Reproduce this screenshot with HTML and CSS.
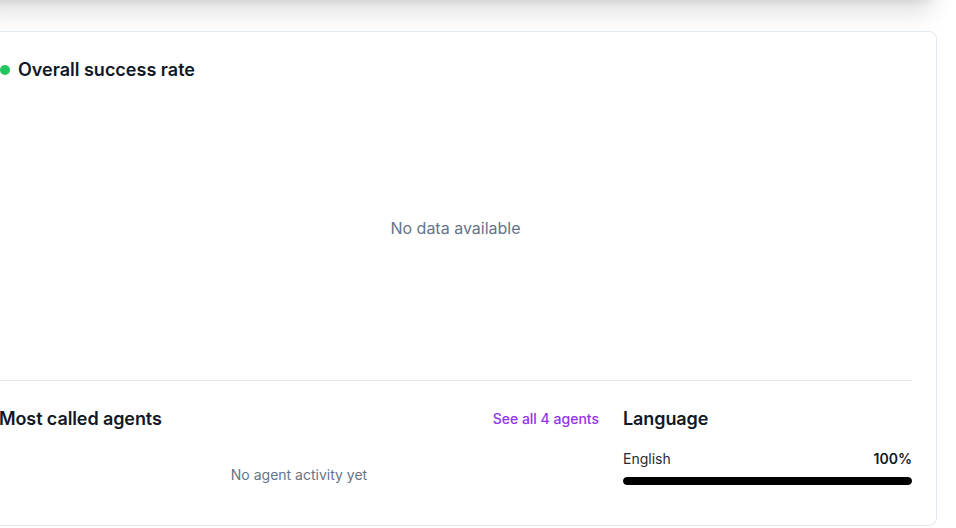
FILE: index.html
```html
<!DOCTYPE html>
<html lang="en">
<head>
<meta charset="utf-8">
<title>Overview</title>
<link rel="stylesheet" href="styles.css">
</head>
<body>
<div class="page">
  <div class="top-panel"></div>
  <section class="card">
    <div class="card-title">
      <span class="dot"></span>
      <h2>Overall success rate</h2>
    </div>
    <div class="chart">
      <p class="empty">No data available</p>
    </div>
    <div class="bottom">
      <div class="agents">
        <div class="row-head">
          <h3>Most called agents</h3>
          <a class="link" href="#">See all 4 agents</a>
        </div>
        <p class="empty-small">No agent activity yet</p>
      </div>
      <div class="language">
        <h3>Language</h3>
        <div class="lang-row">
          <span>English</span>
          <span class="pct">100%</span>
        </div>
        <div class="bar"><div class="bar-fill" style="width:100%"></div></div>
      </div>
    </div>
  </section>
</div>
</body>
</html>
```

FILE: styles.css
```css
* { box-sizing: border-box; }
html, body { margin: 0; padding: 0; background: #ffffff; }
body {
  font-family: Inter, "Noto Sans", "Liberation Sans", sans-serif;
  color: #111827;
  overflow: hidden;
}
.page {
  margin-left: -26px;
  width: 963px;
  display: flex;
  flex-direction: column;
}
.top-panel {
  height: 60px;
  margin-top: -62px;
  width: 100%;
  background: #fff;
  border-radius: 12px;
  box-shadow: 0 20px 25px -5px rgba(0,0,0,0.12), 0 8px 10px -6px rgba(0,0,0,0.12);
}
.card {
  margin-top: 33px;
  border: 1px solid #e2e8f0;
  border-radius: 8px;
  padding: 24px;
  background: #fff;
}
.card-title {
  display: flex;
  align-items: center;
  gap: 8px;
  height: 28px;
}
.dot {
  width: 10px;
  height: 10px;
  margin-left: 1px;
  border-radius: 50%;
  background: #22c55e;
}
h2 {
  margin: 0;
  font-size: 18px;
  line-height: 28px;
  font-weight: 600;
  color: #111827;
}
.chart {
  height: 264px;
  margin-top: 12px;
  margin-bottom: 20px;
  display: flex;
  align-items: center;
  justify-content: center;
}
.empty {
  margin: 0;
  font-size: 16px;
  line-height: 24px;
  color: #64748b;
}
.bottom {
  border-top: 1px solid #e2e8f0;
  padding-top: 24px;
  display: grid;
  grid-template-columns: 1fr 289px;
  gap: 24px;
}
h3 {
  margin: 0;
  font-size: 18px;
  line-height: 28px;
  font-weight: 600;
  color: #111827;
  letter-spacing: -0.1px;
}
.row-head {
  display: flex;
  justify-content: space-between;
  align-items: center;
}
.link {
  font-size: 14px;
  line-height: 20px;
  color: #9333ea;
  text-decoration: none;
  font-weight: 500;
}
.empty-small {
  margin: 16px 0 0;
  padding: 16px 0;
  text-align: center;
  font-size: 14px;
  line-height: 20px;
  color: #64748b;
}
.lang-row {
  margin-top: 16px;
  display: flex;
  justify-content: space-between;
  font-size: 14px;
  line-height: 20px;
  color: #1f2937;
}
.pct { font-weight: 600; color: #111827; }
.bar {
  margin-top: 8px;
  height: 8px;
  border-radius: 9999px;
  background: #e5e7eb;
  overflow: hidden;
}
.bar-fill {
  height: 100%;
  background: #000;
  border-radius: 9999px;
}
```
